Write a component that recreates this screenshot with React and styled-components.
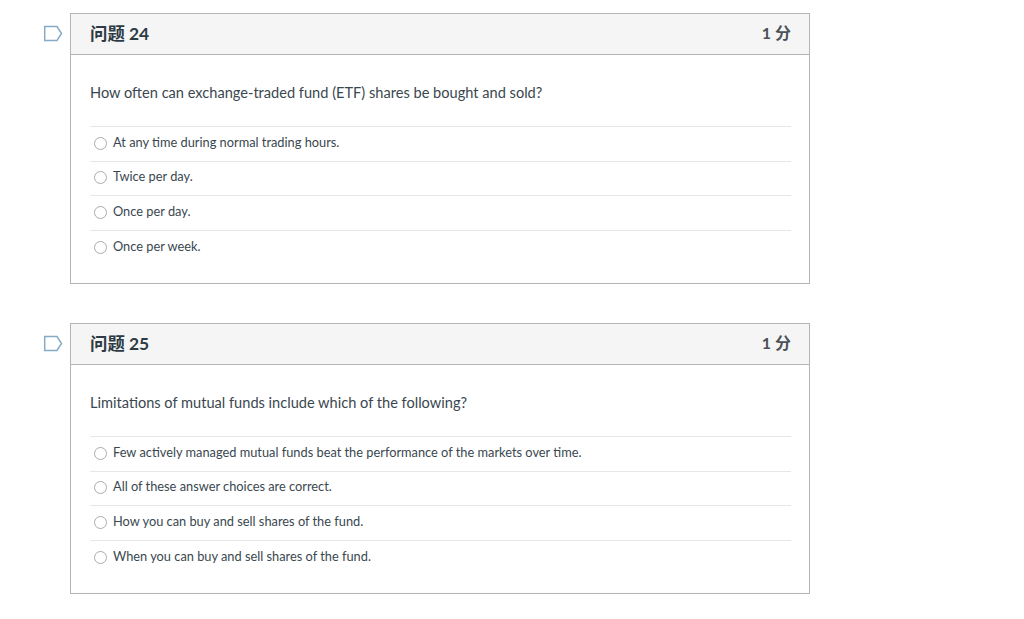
import React from "react";
import styled, { createGlobalStyle } from "styled-components";

const Global = createGlobalStyle`
  html, body {
    margin: 0;
    padding: 0;
    background: #fff;
  }
  body {
    font-family: Lato, "Noto Sans CJK SC", sans-serif;
    color: #2d3b45;
  }
`;

const Page = styled.div`
  width: 1024px;
  height: 619px;
  overflow: hidden;
  padding: 13px 0 0 70px;
  box-sizing: border-box;
  display: flex;
  flex-direction: column;
  gap: 39px;
`;

const Question = styled.section`
  position: relative;
  width: 740px;
  height: 271px;
  box-sizing: border-box;
  border: 1px solid #b4b4b4;
`;

const Flag = styled.svg`
  position: absolute;
  left: -28px;
  top: 11px;
  width: 20px;
  height: 17px;
`;

const Header = styled.header`
  height: 41px;
  box-sizing: border-box;
  background: #f5f5f5;
  border-bottom: 1px solid #b4b4b4;
  padding: 0 18px 4px 19px;
  display: flex;
  align-items: center;
  justify-content: space-between;
  font-weight: 700;
`;

const Title = styled.h2`
  margin: 0;
  font-size: 17.4px;
  font-weight: 700;
  color: #2d3b45;
`;

const Points = styled.div`
  font-size: 16px;
  color: #4b5257;
`;

const Body = styled.div`
  padding: 29px 18px 0 19px;
`;

const Prompt = styled.p`
  margin: 0 0 22px;
  font-size: 14.6px;
  line-height: 18px;
  height: 20px;
  color: #3a474f;
`;

const Answers = styled.ul`
  list-style: none;
  margin: 0;
  padding: 0;
`;

const Answer = styled.li`
  height: 34.6px;
  box-sizing: border-box;
  border-top: 1px solid #e6e6e6;
  display: flex;
  align-items: center;
  padding: 0 0 4px 4px;
  font-size: 12.8px;
  color: #3a474f;
`;

const Radio = styled.span`
  width: 11px;
  height: 11px;
  border: 1px solid #ababab;
  border-radius: 50%;
  background: #fff;
  margin: 3px 6px 0 0;
  flex: none;
`;

const questions = [
  {
    number: 24,
    prompt: "How often can exchange-traded fund (ETF) shares be bought and sold?",
    answers: [
      "At any time during normal trading hours.",
      "Twice per day.",
      "Once per day.",
      "Once per week.",
    ],
  },
  {
    number: 25,
    prompt: "Limitations of mutual funds include which of the following?",
    answers: [
      "Few actively managed mutual funds beat the performance of the markets over time.",
      "All of these answer choices are correct.",
      "How you can buy and sell shares of the fund.",
      "When you can buy and sell shares of the fund.",
    ],
  },
];

export default function App() {
  return (
    <Page>
      <Global />
      {questions.map((q) => (
        <Question key={q.number}>
          <Flag viewBox="0 0 20 17">
            <path
              d="M1.7 1.5H14L18.5 8.5L14 15.5H1.7Z"
              fill="#fff"
              stroke="#86abc6"
              strokeWidth="1.5"
            />
          </Flag>
          <Header>
            <Title>问题 {q.number}</Title>
            <Points>1 分</Points>
          </Header>
          <Body>
            <Prompt>{q.prompt}</Prompt>
            <Answers>
              {q.answers.map((a) => (
                <Answer key={a}>
                  <Radio />
                  {a}
                </Answer>
              ))}
            </Answers>
          </Body>
        </Question>
      ))}
    </Page>
  );
}
